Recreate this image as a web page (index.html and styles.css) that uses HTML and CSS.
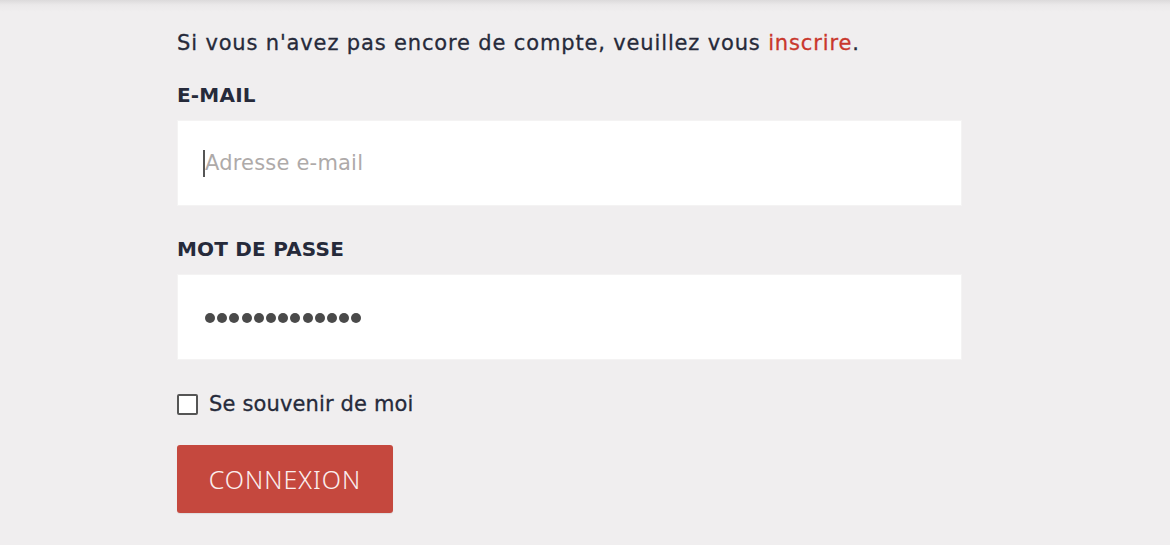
FILE: index.html
```html
<!DOCTYPE html>
<html lang="fr">
<head>
<meta charset="utf-8">
<link rel="stylesheet" href="styles.css">
</head>
<body>
<div class="page">
  <form class="login">
    <p class="intro">Si vous n'avez pas encore de compte, veuillez vous <a href="#" class="link">inscrire</a>.</p>
    <label class="label label-email" for="email">E-MAIL</label>
    <div class="field"><span class="caret"></span><span class="placeholder">Adresse e-mail</span></div>
    <label class="label label-pass" for="pass">MOT DE PASSE</label>
    <div class="field"><span class="dots"><i></i><i></i><i></i><i></i><i></i><i></i><i></i><i></i><i></i><i></i><i></i><i></i><i></i></span></div>
    <div class="remember"><span class="box"></span><span class="remember-text">Se souvenir de moi</span></div>
    <button type="button" class="btn">CONNEXION</button>
  </form>
</div>
</body>
</html>
```

FILE: styles.css
```css
html, body {
  margin: 0;
  padding: 0;
}
body {
  background: #f0eeef;
  font-family: "DejaVu Sans", "Noto Sans", sans-serif;
  color: #262a3a;
  height: 545px;
  overflow: hidden;
}
.page {
  height: 545px;
  background: linear-gradient(to bottom, #dcdadb 0px, #ebe9ea 5px, #f0eeef 12px, #f0eeef 100%);
  padding-left: 177px;
  box-sizing: border-box;
}
.login {
  width: 785px;
  display: flex;
  flex-direction: column;
  align-items: flex-start;
  padding-top: 29px;
}
.intro {
  margin: 0;
  font-size: 21px;
  line-height: 28px;
  letter-spacing: 0.85px;
  white-space: nowrap;
  -webkit-text-stroke: 0.3px currentColor;
}
.link {
  color: #c9372c;
  text-decoration: none;
}
.label {
  font-size: 20px;
  line-height: 28px;
  font-weight: 700;
  letter-spacing: 0.2px;
}
.label-email { margin-top: 24px; }
.label-pass { margin-top: 30px; }
.field {
  margin-top: 12px;
  width: 783px;
  height: 84px;
  margin-left: 1px;
  background: #ffffff;
  box-shadow: 0 0 0 1px #f4f3f3;
  display: flex;
  align-items: center;
  padding-left: 25px;
  box-sizing: border-box;
}
.caret {
  width: 2px;
  height: 27px;
  background: #555;
  margin-top: 1px;
}
.placeholder {
  color: #aeaaa9;
  font-size: 21px;
  letter-spacing: 0.2px;
  margin-left: 0px;
}
.dots {
  display: flex;
  gap: 2.2px;
  margin-left: 2px;
  margin-top: 2px;
}
.dots i {
  display: block;
  width: 10px;
  height: 10px;
  border-radius: 50%;
  background: #4a4a4a;
}
.remember {
  margin-top: 31px;
  height: 28px;
  display: flex;
  align-items: center;
}
.box {
  width: 21px;
  height: 21px;
  border: 2px solid #555;
  border-radius: 2px;
  background: #fff;
  box-sizing: border-box;
}
.remember-text {
  margin-left: 11px;
  font-size: 21px;
  letter-spacing: 0.15px;
  -webkit-text-stroke: 0.3px currentColor;
}
.btn {
  margin-top: 27px;
  width: 216px;
  height: 68px;
  background: #c5483e;
  border: none;
  border-radius: 3px;
  box-shadow: 0 1px 1px rgba(0,0,0,0.08);
  color: #fbeeee;
  font-family: "Noto Sans", "Open Sans", sans-serif;
  font-size: 25px;
  font-weight: 300;
  letter-spacing: 1px;
  padding: 0;
  cursor: pointer;
}
```
